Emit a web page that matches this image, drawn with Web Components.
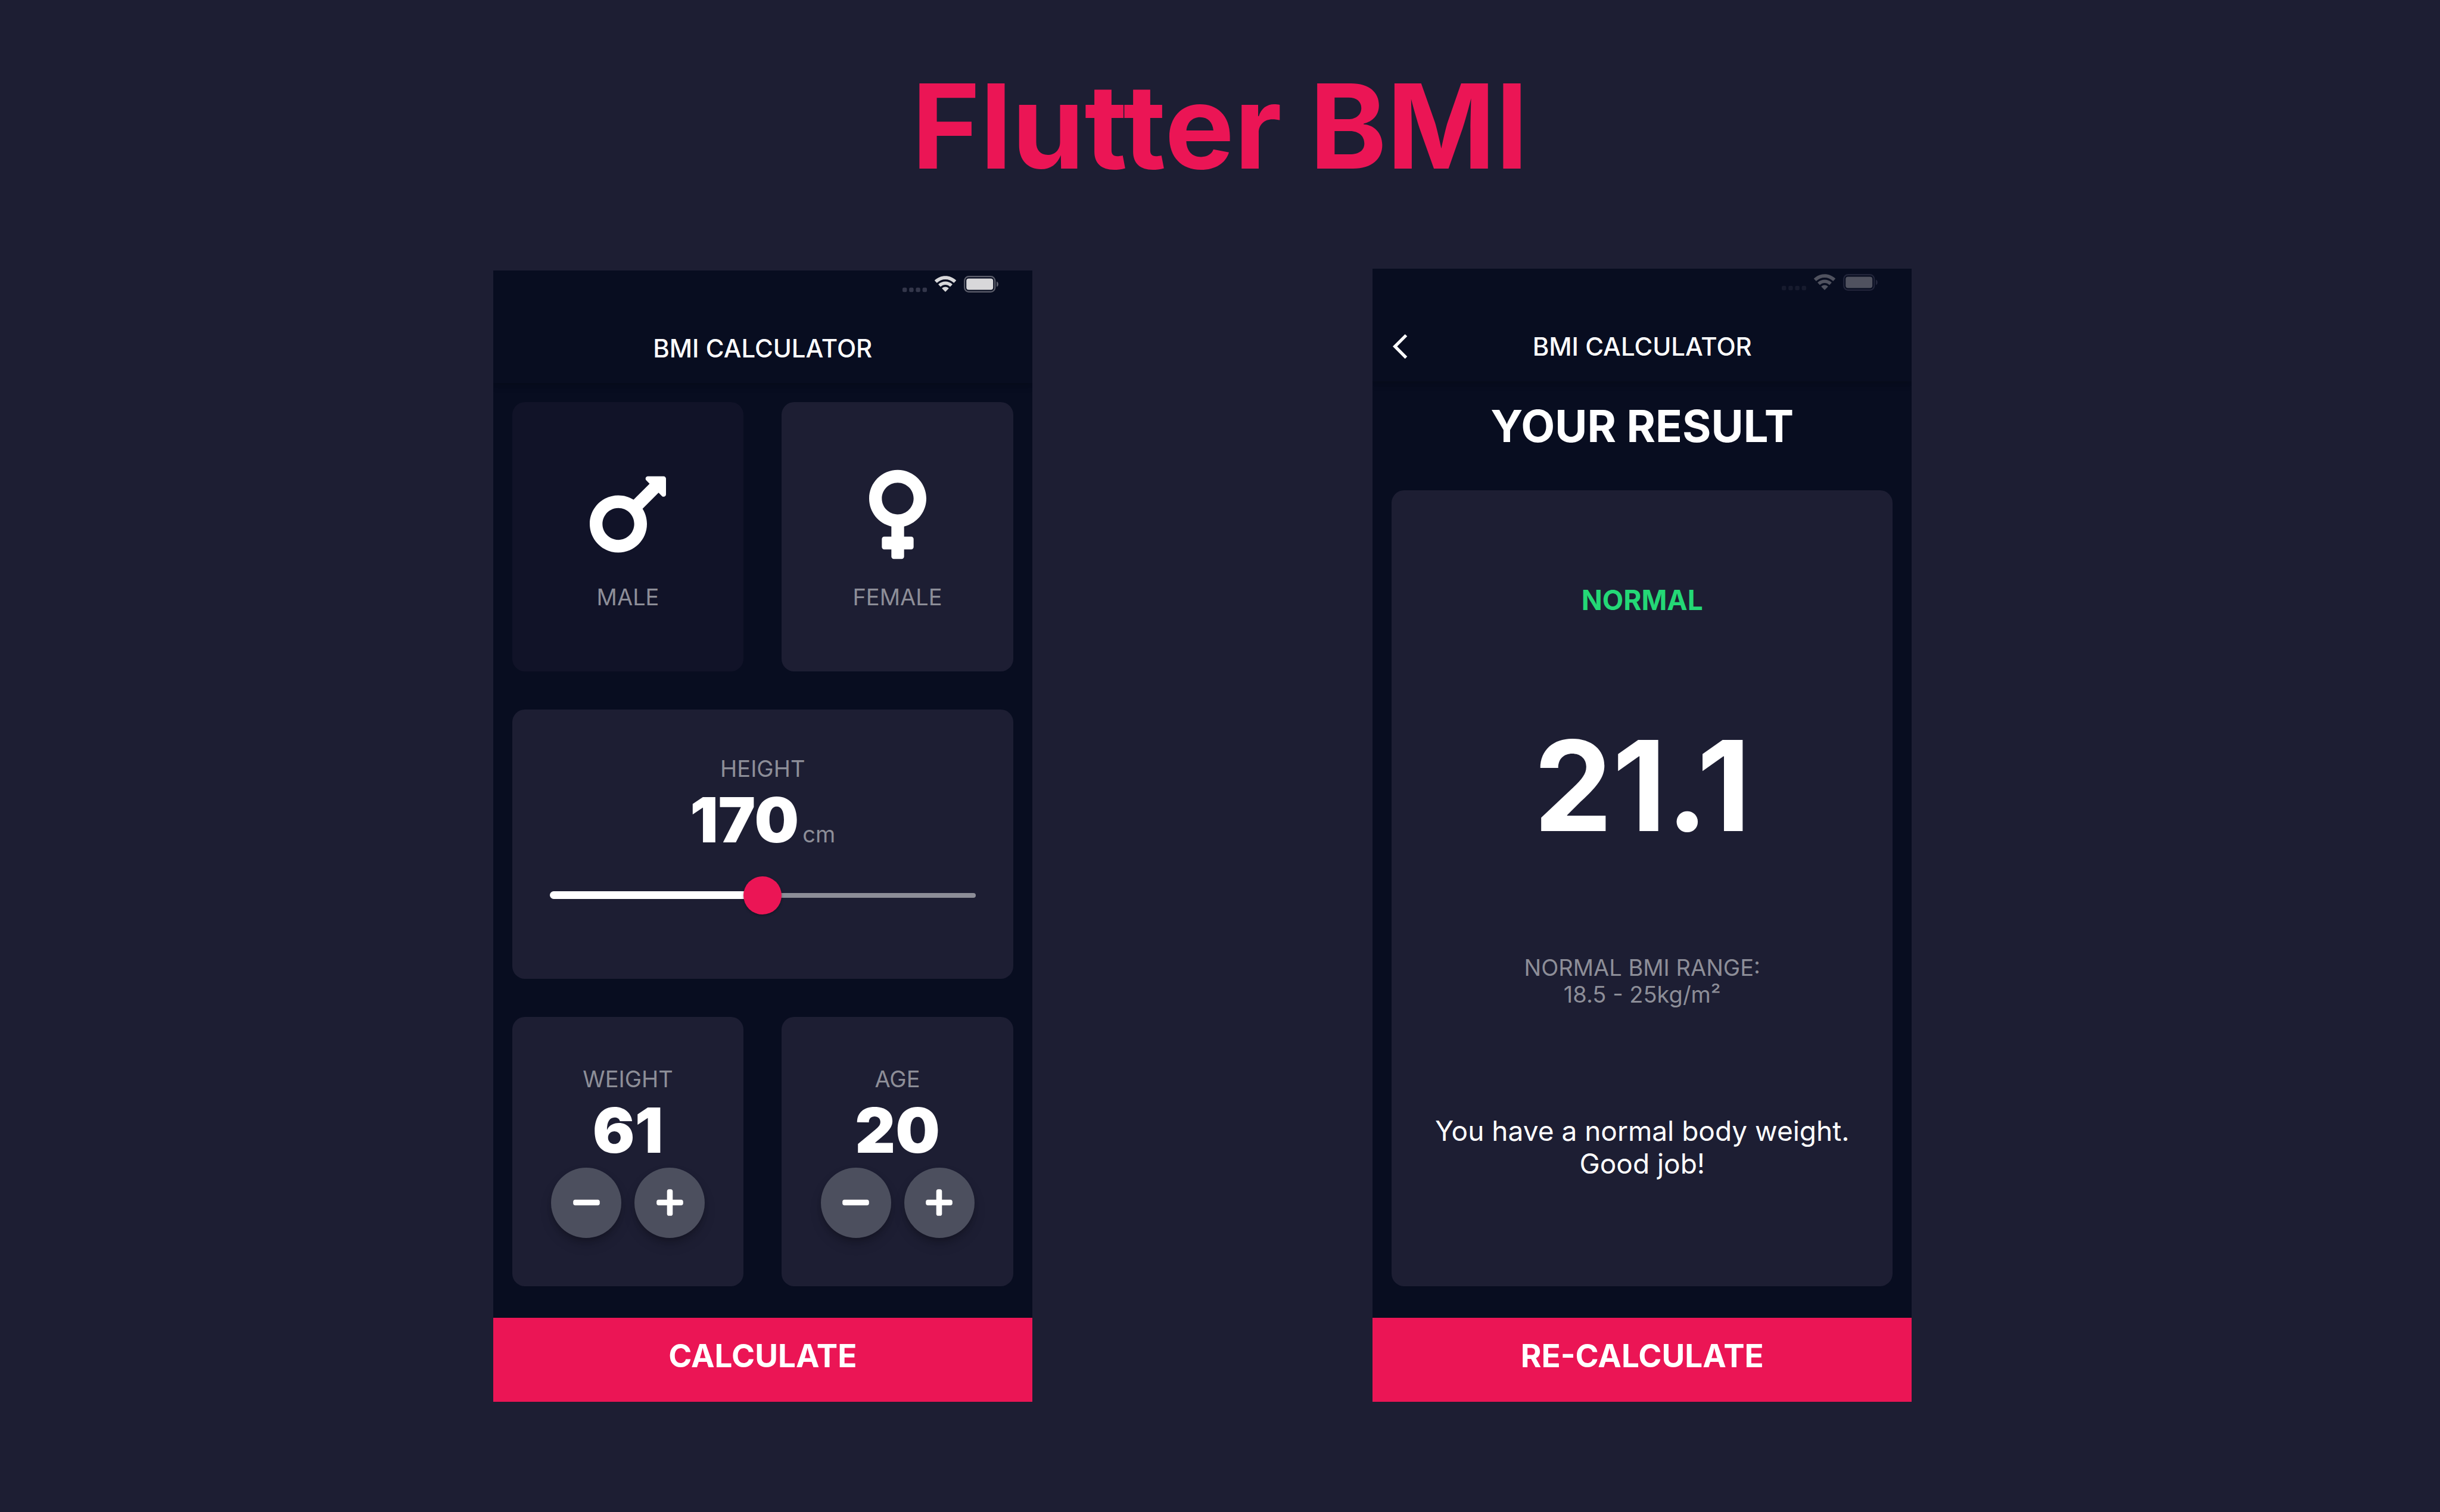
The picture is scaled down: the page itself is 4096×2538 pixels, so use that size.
<!DOCTYPE html>
<html lang="en">
<head>
<meta charset="utf-8">
<meta name="viewport" content="width=device-width, initial-scale=1">
<title>Flutter BMI</title>
<style>
  :root {
    --ink: #080d20;
    --card: #1d1e33;
    --card-off: #111328;
    --accent: #eb1555;
    --muted: #8d8e98;
    --round: #4c4f5e;
    --good: #24d876;
  }
  body { margin: 0; background: var(--card); color: #fff; font-family: Inter, "Liberation Sans", sans-serif; }
</style>
</head>
<body>
<bmi-showcase>
  <span slot="title">Flutter BMI</span>
  <bmi-phone heading="BMI CALCULATOR" action="CALCULATE">
    <bmi-row>
      <bmi-gender kind="male">MALE</bmi-gender>
      <bmi-gender kind="female" active>FEMALE</bmi-gender>
    </bmi-row>
    <bmi-height label="HEIGHT" value="170" unit="cm"></bmi-height>
    <bmi-row>
      <bmi-counter label="WEIGHT" value="61"></bmi-counter>
      <bmi-counter label="AGE" value="20"></bmi-counter>
    </bmi-row>
  </bmi-phone>
  <bmi-phone heading="BMI CALCULATOR" action="RE-CALCULATE" back dim>
    <bmi-result>
      <span slot="title">YOUR RESULT</span>
      <span slot="verdict">NORMAL</span>
      <span slot="score">21.1</span>
      <span slot="range">NORMAL BMI RANGE:<br>18.5 - 25kg/m²</span>
      <span slot="advice">You have a normal body weight.<br>Good job!</span>
    </bmi-result>
  </bmi-phone>
</bmi-showcase>

<script>
const BASE = `
  *, *::before, *::after { box-sizing: border-box; }
  button { margin: 0; padding: 0; border: 0; background: none; color: inherit; font: inherit; cursor: pointer; }
  svg { display: block; }
  h1, h2, p { margin: 0; }
  .label { font-size: 38px; line-height: 45px; color: var(--muted); }
  .number { font-size: 105px; line-height: 126px; font-weight: 900; }
`;

class BmiElement extends HTMLElement {
  connectedCallback() {
    if (this.shadowRoot) return;
    const root = this.attachShadow({ mode: "open" });
    root.innerHTML = `<style>${BASE}${this.styles()}</style>${this.markup()}`;
    this.ready(root);
  }
  attr(name) { return this.getAttribute(name) || ""; }
  ready() {}
}

customElements.define("bmi-showcase", class extends BmiElement {
  styles() { return `
    :host { display: flex; flex-direction: column; min-height: 100vh; padding: 96px 0 185px; box-sizing: border-box; gap: 124px; }
    h1 { text-align: center; color: var(--accent); font-size: 196px; line-height: 231px; font-weight: 700; }
    main { flex: 1; display: flex; align-items: flex-end; gap: 24%; padding: 0 21.65% 0 20.21%; }
  `; }
  markup() { return `<h1><slot name="title"></slot></h1><main><slot></slot></main>`; }
});

customElements.define("bmi-status", class extends BmiElement {
  styles() { return `
    :host { display: flex; justify-content: flex-end; align-items: flex-start; gap: 13px; height: 71px; padding: 9px 57px 0 0; box-sizing: border-box; --solid: #d8d8da; --line: #5d5f6c; --dot: #33364a; }
    :host([dim]) { --solid: #50525f; --line: #22253a; --dot: #171b2e; }
  `; }
  markup() { return `
    <svg width="41" height="28" viewBox="0 0 41 28" fill="var(--dot)" aria-hidden="true"><rect y="19.800" width="7.400" height="7.400" rx="2.300"/><rect x="11.200" y="19.800" width="7.400" height="7.400" rx="2.300"/><rect x="22.400" y="19.800" width="7.400" height="7.400" rx="2.300"/><rect x="33.600" y="19.800" width="7.400" height="7.400" rx="2.300"/></svg>
    <svg width="36" height="27" viewBox="0 0 162 120" fill="var(--solid)" aria-hidden="true">
      <path d="M81 0C112 0 140 12 161 32Q163 34 161 36L147 51Q145 53 143 51C126 35 105 26 81 26S36 35 19 51Q17 53 15 51L1 36Q-1 34 1 32C22 12 50 0 81 0Z"/>
      <path d="M81 42C101 42 119 50 133 62Q135 64 133 66L119 80Q117 82 115 80C106 72 94 67 81 67S56 72 47 80Q45 82 43 80L29 66Q27 64 29 62C43 50 61 42 81 42Z"/>
      <path d="M81 83C90 83 98 87 105 92Q107 94 105 96L83 119Q81 121 79 119L57 96Q55 94 57 92C64 87 72 83 81 83Z"/>
    </svg>
    <svg width="58" height="28" viewBox="0 0 58 28" aria-hidden="true">
      <rect x="1.200" y="1.200" width="51" height="25.600" rx="7" fill="none" stroke="var(--line)" stroke-width="2.200"/>
      <rect x="4.200" y="4.500" width="45" height="19" rx="4" fill="var(--solid)"/>
      <path d="M55 9.500C57 10.300 57.900 12 57.900 14S57 17.700 55 18.500Z" fill="var(--line)"/>
    </svg>`; }
});

customElements.define("bmi-phone", class extends BmiElement {
  styles() { return `
    :host { flex: 1; min-width: 0; display: flex; flex-direction: column; background: var(--ink); overflow: hidden; }
    header { position: relative; background: var(--ink); box-shadow: 0 4px 8px -2px rgba(0,0,0,.12), 0 8px 10px rgba(0,0,0,.08); }
    .bar { display: grid; grid-template-columns: 1fr auto 1fr; align-items: center; height: 118px; padding: 0 34px; }
    h2 { grid-column: 2; font-size: 42px; line-height: 51px; font-weight: 500; }
    .back { grid-column: 1; justify-self: start; }
    .body { display: flex; flex-direction: column; gap: 64px; padding: 32px 32px 53px; }
    .action { height: 141px; padding-bottom: 12px; background: var(--accent); font-size: 53px; line-height: 63px; font-weight: 700; }
  `; }
  markup() {
    const back = this.hasAttribute("back") ? `<button class="back" aria-label="Back"><svg width="25" height="51" viewBox="0 0 12 24" fill="#fff"><path d="M11.670 3.870 9.900 2.100 0 12l9.900 9.900 1.770-1.770L3.540 12z"/></svg></button>` : "";
    return `
    <header>
      <bmi-status ${this.hasAttribute("dim") ? "dim" : ""}></bmi-status>
      <div class="bar">${back}<h2>${this.attr("heading")}</h2></div>
    </header>
    <div class="body"><slot></slot></div>
    <button class="action">${this.attr("action")}</button>`;
  }
});

customElements.define("bmi-row", class extends BmiElement {
  styles() { return `:host { display: flex; gap: 64px; } ::slotted(*) { flex: 1; min-width: 0; }`; }
  markup() { return `<slot></slot>`; }
});

const ICONS = {
  male: `<svg width="128" height="171" viewBox="0 0 384 512" fill="#fff" aria-hidden="true"><path d="M372 64h-79c-10.700 0-16 12.900-8.500 20.500l16.900 16.900-80.700 80.700c-22.200-14-48.500-22.100-76.700-22.100C64.500 160 0 224.500 0 304s64.500 144 144 144 144-64.500 144-144c0-28.200-8.100-54.500-22.100-76.700l80.700-80.700 16.900 16.900c7.600 7.600 20.500 2.200 20.500-8.500V76c0-6.600-5.400-12-12-12zM144 384c-44.100 0-80-35.900-80-80s35.900-80 80-80 80 35.900 80 80-35.900 80-80 80z"/></svg>`,
  female: `<svg width="96" height="171" viewBox="0 0 288 512" fill="#fff" aria-hidden="true"><path d="M288 176c0-79.500-64.500-144-144-144S0 96.500 0 176c0 68.500 47.900 125.900 112 140.400V368H76c-6.600 0-12 5.400-12 12v40c0 6.600 5.400 12 12 12h36v36c0 6.600 5.400 12 12 12h40c6.600 0 12-5.400 12-12v-36h36c6.600 0 12-5.400 12-12v-40c0-6.600-5.400-12-12-12h-36v-51.600c64.100-14.600 112-71.900 112-140.400zm-224 0c0-44.100 35.900-80 80-80s80 35.900 80 80-35.900 80-80 80-80-35.900-80-80z"/></svg>`,
  minus: `<svg width="45" height="51" viewBox="0 0 448 512" fill="#fff" aria-hidden="true"><path d="M416 208H32c-17.670 0-32 14.330-32 32v32c0 17.670 14.330 32 32 32h384c17.670 0 32-14.330 32-32v-32c0-17.670-14.330-32-32-32z"/></svg>`,
  plus: `<svg width="45" height="51" viewBox="0 0 448 512" fill="#fff" aria-hidden="true"><path d="M416 208H272V64c0-17.670-14.330-32-32-32h-32c-17.670 0-32 14.330-32 32v144H32c-17.670 0-32 14.330-32 32v32c0 17.670 14.330 32 32 32h144v144c0 17.670 14.330 32 32 32h32c17.670 0 32-14.330 32-32V304h144c17.670 0 32-14.330 32-32v-32c0-17.670-14.330-32-32-32z"/></svg>`
};

const CARD = `
  :host { display: block; }
  .card { display: flex; flex-direction: column; align-items: center; justify-content: center; width: 100%; min-height: 452px; border-radius: 21px; background: var(--card); }
`;

customElements.define("bmi-gender", class extends BmiElement {
  styles() { return CARD + `
    .card { gap: 31px; background: var(--card-off); }
    :host([active]) .card { background: var(--card); }
  `; }
  markup() { return `<button class="card" aria-pressed="${this.hasAttribute("active")}">${ICONS[this.attr("kind")]}<span class="label"><slot></slot></span></button>`; }
  ready(root) {
    root.querySelector("button").addEventListener("click", () => {
      for (const el of this.parentElement.children) {
        el.toggleAttribute("active", el === this);
        el.shadowRoot.querySelector("button").setAttribute("aria-pressed", el === this);
      }
    });
  }
});

customElements.define("bmi-height", class extends BmiElement {
  styles() { return CARD + `
    .value { display: flex; align-items: baseline; gap: 6px; }
    .slider { display: grid; align-items: center; align-self: stretch; height: 127px; padding: 0 63px; }
    .slider > * { grid-area: 1 / 1; }
    .track { display: flex; align-items: center; }
    .fill { width: 50%; height: 13px; border-radius: 7px 0 0 7px; background: #fff; }
    .rest { flex: 1; height: 8px; border-radius: 0 4px 4px 0; background: var(--muted); }
    input { appearance: none; width: 100%; height: 64px; margin: 0; background: transparent; }
    input::-webkit-slider-thumb { appearance: none; width: 64px; height: 64px; border-radius: 50%; background: var(--accent); box-shadow: 0 2px 4px rgba(0,0,0,.3); }
  `; }
  markup() { return `
    <div class="card">
      <label class="label" for="h">${this.attr("label")}</label>
      <div class="value"><span class="number">${this.attr("value")}</span><span class="label unit">${this.attr("unit")}</span></div>
      <div class="slider">
        <div class="track"><span class="fill"></span><span class="rest"></span></div>
        <input id="h" type="range" min="120" max="220" value="${this.attr("value")}">
      </div>
    </div>`; }
  ready(root) {
    const input = root.querySelector("input");
    input.addEventListener("input", () => {
      root.querySelector(".number").textContent = input.value;
      root.querySelector(".fill").style.width = `${input.value - 120}%`;
    });
  }
});

customElements.define("bmi-counter", class extends BmiElement {
  styles() { return CARD + `
    .buttons { display: flex; gap: 22px; }
    .buttons button { display: grid; place-items: center; width: 118px; height: 118px; border-radius: 50%; background: var(--round); box-shadow: 0 6px 10px -2px rgba(0,0,0,.2), 0 12px 20px rgba(0,0,0,.14); }
  `; }
  markup() { return `
    <div class="card">
      <span class="label">${this.attr("label")}</span>
      <span class="number">${this.attr("value")}</span>
      <div class="buttons"><button aria-label="Decrease">${ICONS.minus}</button><button aria-label="Increase">${ICONS.plus}</button></div>
    </div>`; }
  ready(root) {
    const number = root.querySelector(".number");
    root.querySelectorAll("button").forEach((b, i) => b.addEventListener("click", () => {
      number.textContent = Number(number.textContent) + (i ? 1 : -1);
    }));
  }
});

customElements.define("bmi-result", class extends BmiElement {
  styles() { return `
    :host { display: flex; flex-direction: column; gap: 64px; text-align: center; }
    h1 { font-size: 74px; line-height: 87px; font-weight: 700; }
    .card { display: flex; flex-direction: column; justify-content: space-evenly; min-height: 1336px; border-radius: 21px; background: var(--card); }
    .verdict { font-size: 46px; line-height: 55px; font-weight: 700; color: var(--good); }
    .score { font-size: 210px; line-height: 252px; font-weight: 700; }
    .advice { padding: 21px 0; font-size: 46px; line-height: 55px; }
  `; }
  markup() { return `
    <h1><slot name="title"></slot></h1>
    <div class="card">
      <p class="verdict"><slot name="verdict"></slot></p>
      <p class="score"><slot name="score"></slot></p>
      <p class="label"><slot name="range"></slot></p>
      <p class="advice"><slot name="advice"></slot></p>
    </div>`; }
});
</script>
</body>
</html>
